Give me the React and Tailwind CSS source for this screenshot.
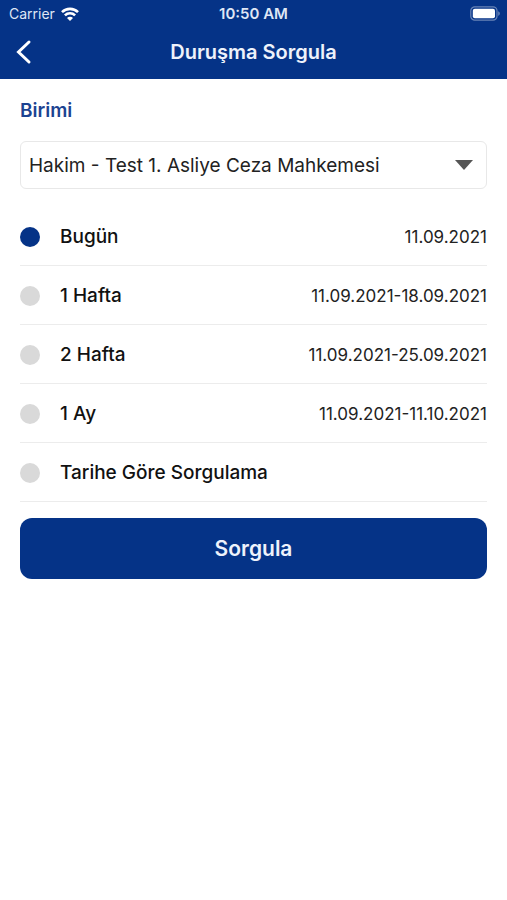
import React, { useState } from "react";

const ranges = [
  { id: "today", label: "Bugün", dates: "11.09.2021" },
  { id: "week1", label: "1 Hafta", dates: "11.09.2021-18.09.2021" },
  { id: "week2", label: "2 Hafta", dates: "11.09.2021-25.09.2021" },
  { id: "month1", label: "1 Ay", dates: "11.09.2021-11.10.2021" },
  { id: "custom", label: "Tarihe Göre Sorgulama", dates: "" },
];

const WifiIcon = () => (
  <svg width="18" height="14" viewBox="0 0 18 14" fill="none" stroke="#fff" strokeWidth="2.6" aria-hidden="true">
    <path d="M1 5.2C5.4 0.8 12.6 0.8 17 5.2" />
    <path d="M3.9 8.4C6.7 5.6 11.3 5.6 14.1 8.4" />
    <path d="M9 14L6 11C7.6 9.4 10.4 9.4 12 11Z" fill="#fff" stroke="none" />
  </svg>
);

const BatteryIcon = () => (
  <svg width="30" height="15" viewBox="0 0 30 15" aria-hidden="true">
    <rect x="0.8" y="0.8" width="26.2" height="13.4" rx="4" fill="none" stroke="#fff" strokeOpacity="0.4" strokeWidth="1.2" />
    <rect x="2.8" y="2.8" width="22.2" height="9.4" rx="2" fill="#fff" />
    <path d="M28.2 5.2C30.4 6 30.4 9 28.2 9.8Z" fill="#fff" fillOpacity="0.4" />
  </svg>
);

const StatusBar = () => (
  <div className="grid grid-cols-3 items-center h-[27px] px-[7px] text-[#dfe6f5]">
    <div className="flex items-center gap-[6px] pl-0.5 text-sm">
      <span>Carrier</span>
      <WifiIcon />
    </div>
    <span className="text-center text-[15px] leading-5 font-semibold">10:50 AM</span>
    <div className="flex justify-end">
      <BatteryIcon />
    </div>
  </div>
);

const RangeOption = ({ range, checked, onChange }) => (
  <label className="flex items-center h-[59px] pt-px border-b border-[#ececec] cursor-pointer">
    <input
      type="radio"
      name="range"
      value={range.id}
      checked={checked}
      onChange={() => onChange(range.id)}
      className="appearance-none shrink-0 w-5 h-5 rounded-full bg-[#d9d9d9] checked:bg-[#053387]"
    />
    <span className="ml-5 text-[19px] leading-7 font-medium text-[#111111]">{range.label}</span>
    <span className="ml-auto text-[17px] leading-7 text-[#222222]">{range.dates}</span>
  </label>
);

const App = () => {
  const [selected, setSelected] = useState("today");

  return (
    <div className="min-h-screen bg-white font-['Inter',sans-serif]">
      <header className="bg-[#053387] h-[79px]">
        <StatusBar />
        <div className="grid grid-cols-[40px_1fr_40px] items-center h-[50px] px-1">
          <button type="button" aria-label="Geri" className="flex justify-center">
            <svg width="16" height="26" viewBox="0 0 16 26" fill="none" stroke="#fff" strokeWidth="3" strokeLinecap="round" aria-hidden="true">
              <path d="M13 3L2.5 13L13 23" />
            </svg>
          </button>
          <h1 className="text-center text-xl font-semibold text-[#eef2fb]">Duruşma Sorgula</h1>
        </div>
      </header>

      <form className="px-5 pt-[18px]" onSubmit={(e) => e.preventDefault()}>
        <label htmlFor="unit" className="block text-[19px] leading-7 font-semibold text-[#1c4391]">
          Birimi
        </label>
        <div className="relative mt-4">
          <select
            id="unit"
            className="appearance-none w-full h-12 pt-0.5 pl-2 pr-10 rounded-md border border-[#e8e8e8] bg-white text-[19px] text-[#222222]"
          >
            <option>Hakim - Test 1. Asliye Ceza Mahkemesi</option>
          </select>
          <svg
            className="absolute right-[14px] top-[19px] pointer-events-none"
            width="18"
            height="10"
            viewBox="0 0 18 10"
            aria-hidden="true"
          >
            <path d="M0 0H18L9 10Z" fill="#555" />
          </svg>
        </div>

        {/* Date ranges */}
        <div className="mt-[18px]">
          {ranges.map((range) => (
            <RangeOption key={range.id} range={range} checked={selected === range.id} onChange={setSelected} />
          ))}
        </div>

        <button type="submit" className="mt-4 w-full h-[61px] rounded-xl bg-[#053387] text-[21px] font-semibold text-[#eef2fb]">
          Sorgula
        </button>
      </form>
    </div>
  );
};

export default App;
